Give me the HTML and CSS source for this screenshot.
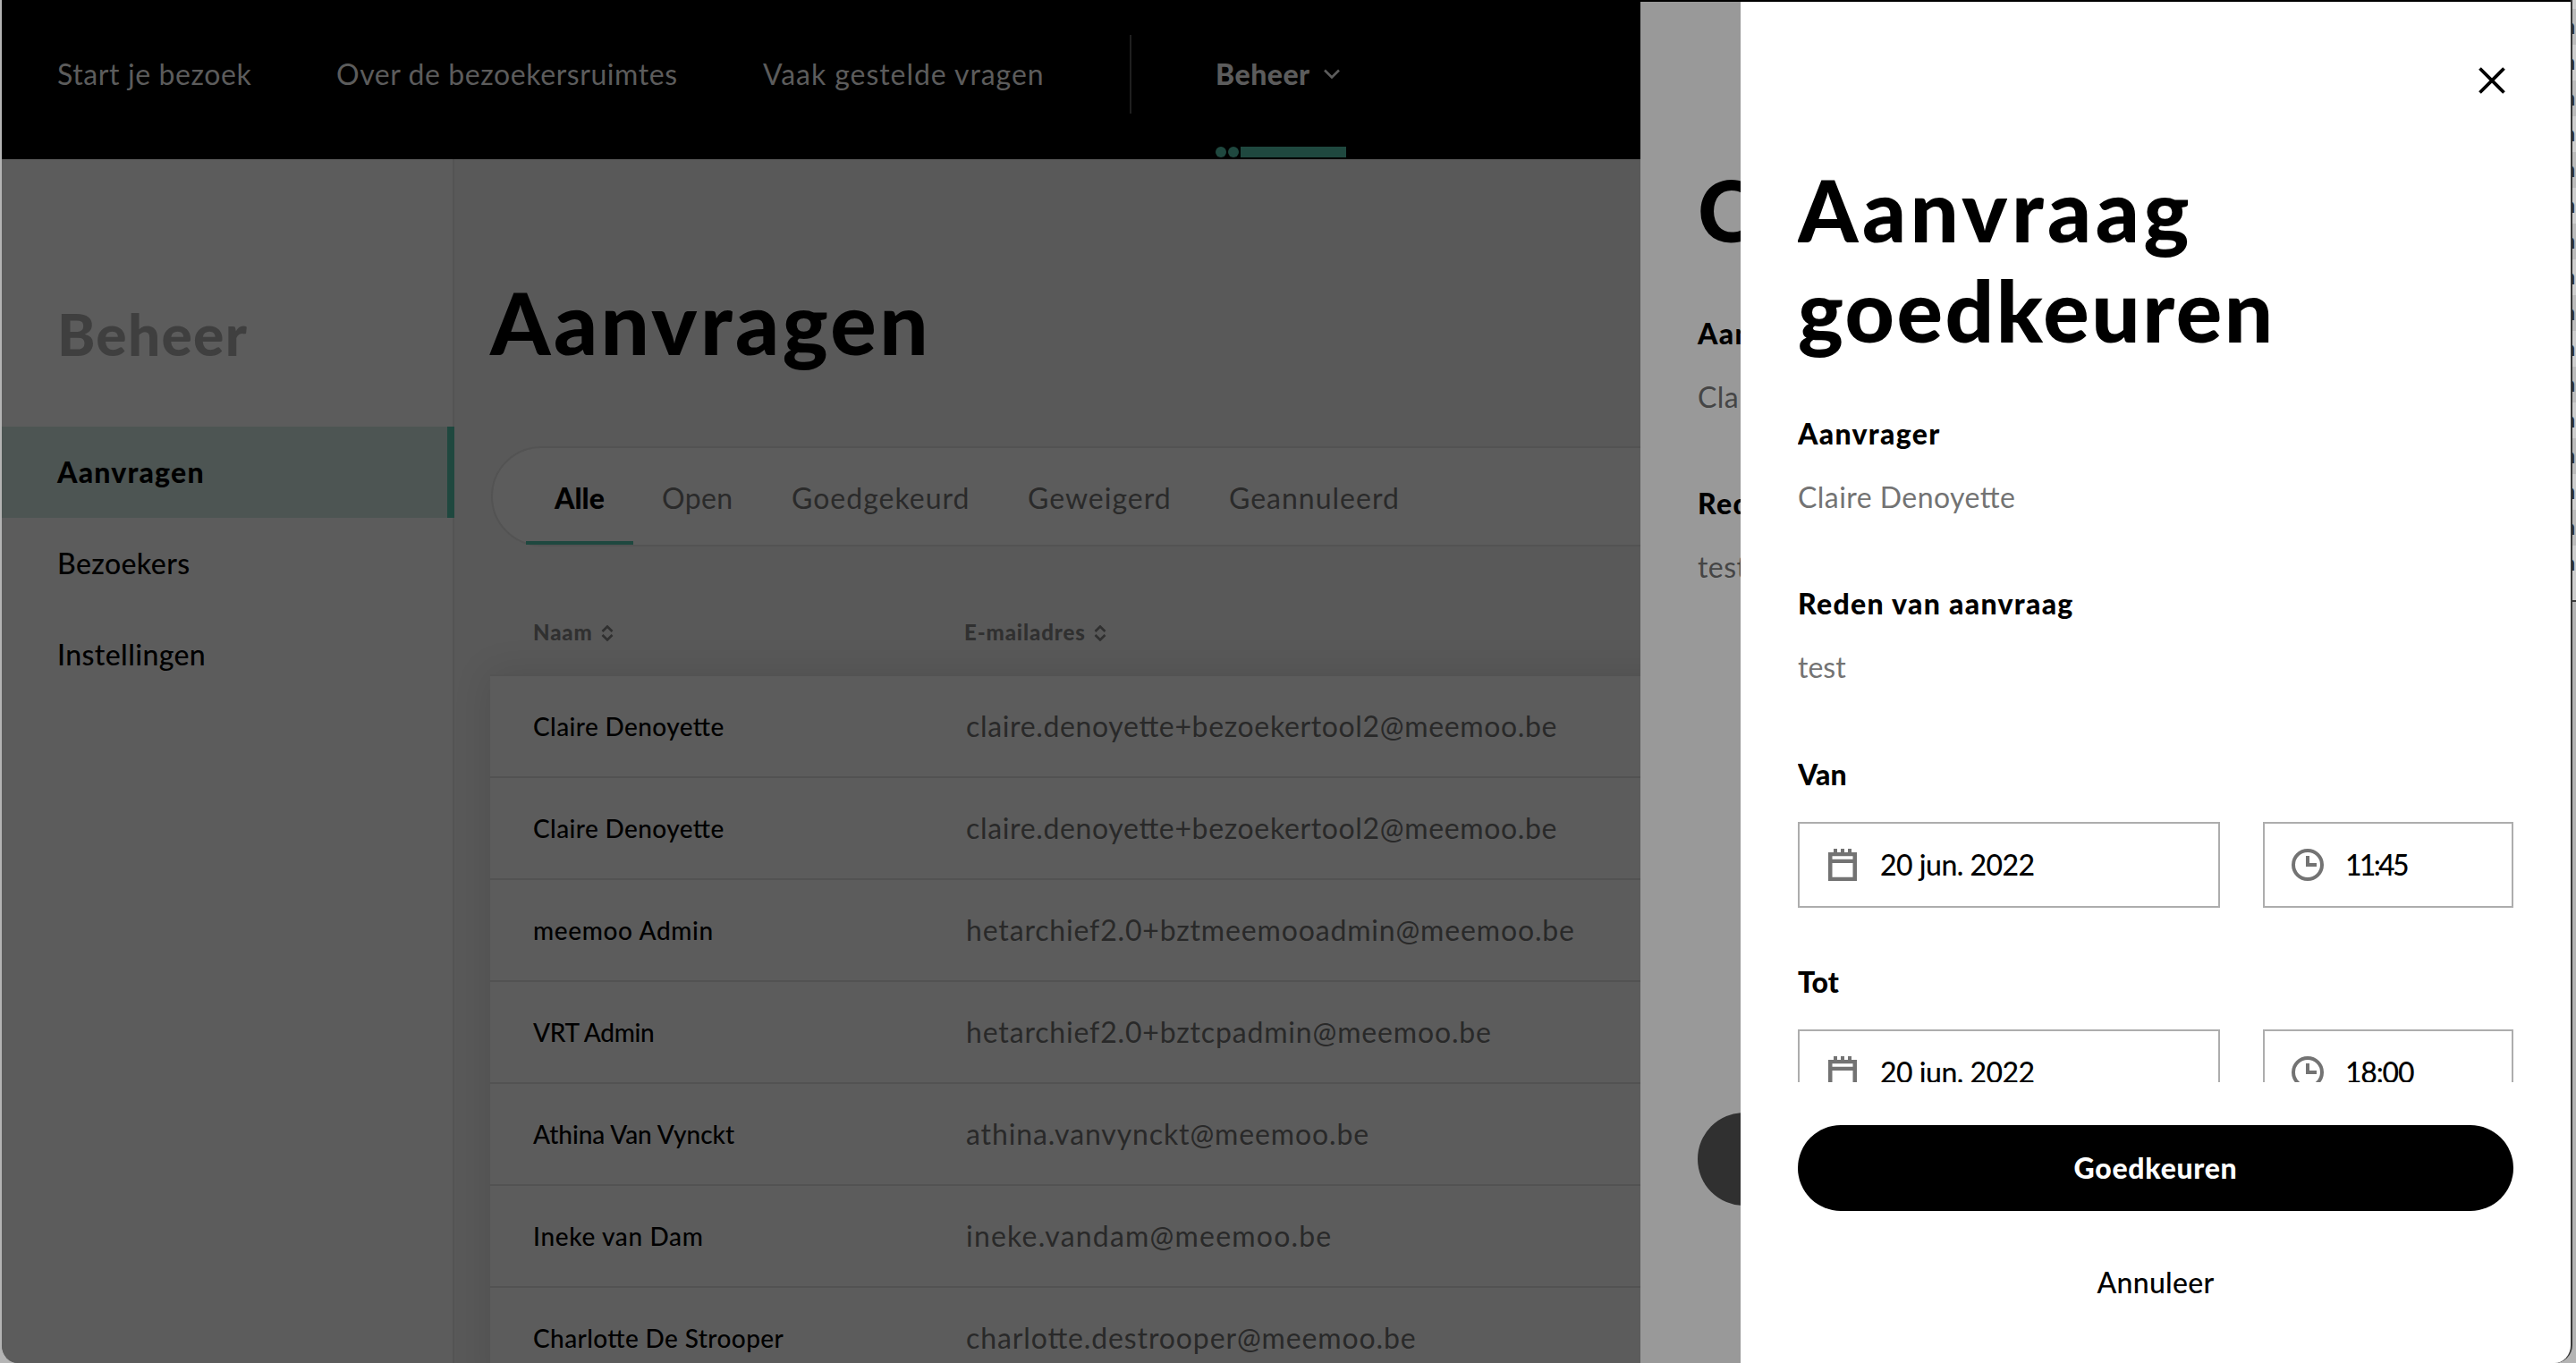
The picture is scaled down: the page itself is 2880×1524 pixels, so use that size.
FILE: index.html
```html
<!DOCTYPE html>
<html lang="nl">
<head>
    <meta charset="UTF-8">
    <meta name="viewport" content="width=device-width, initial-scale=1.0">
    <title>Aanvragen</title>
    <link rel="stylesheet" href="styles.css">
</head>
<body>
    <!-- other window behind the browser -->
    <div class="behind">
        <div>a</div><div>a</div><div>a</div><div>a</div><div>a</div><div>a</div><div>a</div><div>a</div>
        <div>a</div><div>a</div><div>a</div><div>a</div><div>a</div><div>a</div><div>a</div><div>a</div>
    </div>

    <div class="window">
        <header class="header">
            <nav class="nav">
                <a class="nav-link nav-start">Start je bezoek</a>
                <a class="nav-link nav-rooms">Over de bezoekersruimtes</a>
                <a class="nav-link nav-faq">Vaak gestelde vragen</a>
                <span class="nav-divider"></span>
                <a class="nav-link nav-admin">
                    <span class="nav-admin-text">Beheer</span>
                    <svg class="chevron" viewBox="0 0 18 11"><path d="M1 1.5l8 8 8-8" /></svg>
                    <span class="nav-active"><i class="dot"></i><i class="dot"></i><i class="line"></i></span>
                </a>
            </nav>
        </header>

        <div class="layout">
            <aside class="sidebar">
                <h2 class="sidebar-title">Beheer</h2>
                <ul class="menu">
                    <li class="menu-item active">Aanvragen</li>
                    <li class="menu-item">Bezoekers</li>
                    <li class="menu-item">Instellingen</li>
                </ul>
            </aside>

            <main class="main">
                <h1 class="title">Aanvragen</h1>
                <div class="tabs">
                    <span class="tab active">Alle</span>
                    <span class="tab tab-open">Open</span>
                    <span class="tab tab-approved">Goedgekeurd</span>
                    <span class="tab tab-denied">Geweigerd</span>
                    <span class="tab tab-cancelled">Geannuleerd</span>
                </div>

                <div class="table-head">
                    <span class="col-name"><span class="head-text">Naam</span><svg class="sort" viewBox="0 0 14 18"><path d="M1.5 7L7 1.5 12.5 7M1.5 11L7 16.5 12.5 11" /></svg></span>
                    <span class="col-mail"><span class="head-text">E-mailadres</span><svg class="sort" viewBox="0 0 14 18"><path d="M1.5 7L7 1.5 12.5 7M1.5 11L7 16.5 12.5 11" /></svg></span>
                </div>
                <div class="table">
                    <div class="row row-claire"><span class="col-name">Claire Denoyette</span><span class="col-mail">claire.denoyette+bezoekertool2@meemoo.be</span></div>
                    <div class="row row-claire"><span class="col-name">Claire Denoyette</span><span class="col-mail">claire.denoyette+bezoekertool2@meemoo.be</span></div>
                    <div class="row row-meemoo"><span class="col-name">meemoo Admin</span><span class="col-mail">hetarchief2.0+bztmeemooadmin@meemoo.be</span></div>
                    <div class="row row-vrt"><span class="col-name">VRT Admin</span><span class="col-mail">hetarchief2.0+bztcpadmin@meemoo.be</span></div>
                    <div class="row row-athina"><span class="col-name">Athina Van Vynckt</span><span class="col-mail">athina.vanvynckt@meemoo.be</span></div>
                    <div class="row row-ineke"><span class="col-name">Ineke van Dam</span><span class="col-mail">ineke.vandam@meemoo.be</span></div>
                    <div class="row row-charlotte"><span class="col-name">Charlotte De Strooper</span><span class="col-mail">charlotte.destrooper@meemoo.be</span></div>
                </div>
            </main>
        </div>

        <section class="blade blade-back">
            <h2 class="blade-title">C</h2>
            <p class="label">Aan</p>
            <p class="value">Cla</p>
            <p class="label">Red</p>
            <p class="value">test</p>
            <span class="back-button"></span>
        </section>

        <section class="blade blade-front">
            <svg class="close" viewBox="0 0 30 30"><path d="M1.5 1.5l27 27M28.5 1.5l-27 27" /></svg>
            <div class="blade-body">
                <h2 class="blade-title"><span class="title-one">Aanvraag</span><br><span class="title-two">goedkeuren</span></h2>
                <p class="label">Aanvrager</p>
                <p class="value">Claire Denoyette</p>
                <p class="label">Reden van aanvraag</p>
                <p class="value value-reason">test</p>
                <p class="label label-short">Van</p>
                <div class="fields">
                    <div class="field date">
                        <svg class="icon" viewBox="0 0 36 36"><path d="M2 4h32v32H2zM6.5 8.300v3.400h23V8.300zM6.5 16v15.700h23V16zM8 0h4v4H8zM16 0h4v4h-4zM24 0h4v4h-4z" fill-rule="evenodd" /></svg>
                        <span>20 jun. 2022</span>
                    </div>
                    <div class="field time time-from">
                        <svg class="icon" viewBox="0 0 36 36"><path d="M18 0a18 18 0 1 0 0 36a18 18 0 1 0 0-36zM18 4a14 14 0 1 1 0 28a14 14 0 1 1 0-28zM16 8h4v8h8v4H16z" fill-rule="evenodd" /></svg>
                        <span>11:45</span>
                    </div>
                </div>
                <p class="label label-short">Tot</p>
                <div class="fields">
                    <div class="field date">
                        <svg class="icon" viewBox="0 0 36 36"><path d="M2 4h32v32H2zM6.5 8.300v3.400h23V8.300zM6.5 16v15.700h23V16zM8 0h4v4H8zM16 0h4v4h-4zM24 0h4v4h-4z" fill-rule="evenodd" /></svg>
                        <span>20 jun. 2022</span>
                    </div>
                    <div class="field time time-to">
                        <svg class="icon" viewBox="0 0 36 36"><path d="M18 0a18 18 0 1 0 0 36a18 18 0 1 0 0-36zM18 4a14 14 0 1 1 0 28a14 14 0 1 1 0-28zM16 8h4v8h8v4H16z" fill-rule="evenodd" /></svg>
                        <span>18:00</span>
                    </div>
                </div>
            </div>
            <div class="blade-footer">
                <button class="button primary">Goedkeuren</button>
                <button class="button text">Annuleer</button>
            </div>
        </section>
    </div>
</body>
</html>
```
FILE: styles.css
```css
* {
    box-sizing: border-box;
}

body {
    margin: 0;
    background: #b4b4b4;
    font-family: Lato, "Open Sans", sans-serif;
    font-size: 32px;
    line-height: 52px;
    color: #000;
    white-space: nowrap;
    font-feature-settings: "liga" 1;
}

h1, h2, p, ul {
    margin: 0;
    padding: 0;
}

.behind {
    position: absolute;
    top: 0;
    right: 0;
    width: 6px;
    height: 673px;
    padding-top: 10px;
    overflow: hidden;
    background: #cfcfcf;
    border-bottom: 2px solid #3a3a3a;
    opacity: 0.99;
}

.behind div {
    display: flex;
    justify-content: flex-end;
    height: 40px;
    padding-right: 1px;
    font-size: 24px;
    line-height: 38px;
    font-weight: 900;
    color: #2a2a2a;
}

.behind div:nth-child(odd) {
    background: #bdbdbd;
}

.window {
    position: relative;
    width: 2876px;
    height: 1524px;
    overflow: hidden;
    background: #595959;
    border-left: 2px solid #b4b4b4;
    border-right: 2px solid #3a3a3a;
    border-radius: 0 0 20px 20px;
}

.header {
    height: 178px;
    background: #000;
    color: #5c5c5c;
}

.nav {
    display: flex;
    align-items: center;
    height: 165px;
    padding-left: 62px;
}

.nav-start {
    width: 312px;
    letter-spacing: 0.6px;
}

.nav-rooms {
    width: 477px;
    letter-spacing: 0.58px;
}

.nav-faq {
    width: 410px;
    letter-spacing: 0.94px;
}

.nav-divider {
    width: 2px;
    height: 88px;
    margin-right: 94px;
    background: #1f1f1f;
}

.nav-admin {
    position: relative;
    display: flex;
    align-items: center;
    width: 146px;
    font-weight: 900;
    letter-spacing: 0.5px;
}

.nav-admin-text {
    width: 121px;
}

.chevron {
    width: 18px;
    height: 11px;
    fill: none;
    stroke: #5c5c5c;
    stroke-width: 2.6;
}

.nav-active {
    position: absolute;
    left: 0;
    top: 107px;
    display: flex;
    gap: 2px;
    width: 146px;
}

.dot {
    width: 12px;
    height: 12px;
    border-radius: 50%;
    background: #1f483f;
}

.line {
    flex: 1;
    height: 12px;
    background: #1f483f;
}

.layout {
    display: flex;
    height: 1346px;
}

.sidebar {
    width: 506px;
    padding-top: 156px;
    background: #5c5c5c;
    border-right: 2px solid #545454;
}

.sidebar-title {
    padding: 0 0 63px 62px;
    font-size: 64px;
    line-height: 80px;
    font-weight: 900;
    letter-spacing: 1.3px;
    color: #3f3f3f;
}

.menu {
    list-style: none;
}

.menu-item {
    height: 102px;
    margin-bottom: 0.5px;
    padding-left: 62px;
    line-height: 100px;
    font-weight: 500;
    letter-spacing: 0.4px;
}

.menu-item.active {
    margin-right: -2px;
    background: #4d5553;
    border-right: 8px solid #1f483f;
    line-height: 101px;
    font-weight: 900;
    letter-spacing: 1.2px;
}

.main {
    flex: 1;
    padding: 122px 0 0 40px;
}

.title {
    font-size: 96px;
    line-height: 120px;
    font-weight: 900;
    letter-spacing: 3.5px;
}

.tabs {
    display: flex;
    height: 112px;
    margin: 79px 0 0 1px;
    padding-left: 37px;
    background: #5c5c5c;
    border: 2px solid #535353;
    border-radius: 56px 0 0 56px;
    line-height: 111px;
    letter-spacing: 1px;
    color: #2a2a2a;
}

.tab.active {
    width: 120px;
    margin-right: 32px;
    padding-left: 32px;
    border-bottom: 4px solid #1f483f;
    font-weight: 900;
    letter-spacing: 0;
    color: #000;
}

.tab-open {
    width: 145px;
    letter-spacing: 0.4px;
}

.tab-approved {
    width: 264px;
}

.tab-denied {
    width: 225px;
}

.table-head {
    display: flex;
    align-items: center;
    height: 143px;
    padding: 48px 0 0 48px;
    font-size: 24px;
    line-height: 36px;
    font-weight: 900;
    letter-spacing: 0.9px;
    color: #303030;
}

.col-name {
    width: 484px;
}

.table-head .col-name {
    width: 482px;
}

.head-text {
    margin-right: 9px;
}

.sort {
    width: 14px;
    height: 18px;
    vertical-align: -1px;
    fill: none;
    stroke: #303030;
    stroke-width: 2.6;
}

.table {
    border-top: 2px solid #535353;
    background: #5c5c5c;
    box-shadow: 0 0 40px rgba(0, 0, 0, 0.12);
}

.row {
    display: flex;
    height: 114px;
    padding-left: 48px;
    border-bottom: 2px solid #525252;
    line-height: 112px;
}

.row .col-name {
    font-size: 28px;
    font-weight: 500;
    letter-spacing: 0.4px;
}

.row .col-mail {
    letter-spacing: 0.88px;
    color: #292929;
}

.row-claire .col-mail {
    letter-spacing: 0.65px;
}

.row-meemoo .col-mail,
.row-vrt .col-mail {
    letter-spacing: 0.84px;
}

.row-meemoo .col-name,
.row-ineke .col-name {
    letter-spacing: 0.65px;
}

.row-vrt .col-name {
    letter-spacing: -0.3px;
}

.row-athina .col-name {
    letter-spacing: -0.05px;
}

.row-ineke .col-mail {
    letter-spacing: 1.2px;
}

.blade {
    position: absolute;
    top: 2px;
    bottom: 0;
}

.blade-back {
    left: 1832px;
    width: 112px;
    padding: 176px 0 0 64px;
    background: #999;
    overflow: hidden;
}

.blade-title {
    font-size: 96px;
    line-height: 112px;
    font-weight: 900;
}

.title-one {
    letter-spacing: 4.5px;
}

.title-two {
    letter-spacing: 2.5px;
}

.label {
    margin-top: 57px;
    line-height: 52px;
    font-weight: 900;
    letter-spacing: 1.3px;
}

.value {
    margin-top: 19px;
    line-height: 52px;
    letter-spacing: 0.45px;
    color: #737373;
}

.value + .label {
    margin-top: 67px;
}

.value-reason,
.label-short {
    letter-spacing: 0;
}

.value-reason + .label {
    margin-top: 68px;
}

.blade-back .value {
    color: #454545;
}

.back-button {
    display: block;
    width: 400px;
    height: 104px;
    margin-top: 584px;
    border-radius: 52px;
    background: #303030;
}

.blade-front {
    left: 1944px;
    right: 0;
    padding: 73px 62px 0 64px;
    background: #fff;
}

.close {
    display: block;
    width: 30px;
    height: 30px;
    margin: 0 11px 0 auto;
    fill: none;
    stroke: #000;
    stroke-width: 3.8;
}

.blade-body {
    height: 1105px;
    padding-top: 73px;
    overflow: hidden;
}

.fields {
    display: flex;
    gap: 48px;
    width: 800px;
    margin-top: 27px;
}

.field {
    display: flex;
    align-items: center;
    height: 96px;
    padding-left: 30px;
    border: 2px solid #adadad;
    font-weight: 500;
}

.date {
    width: 472px;
    letter-spacing: -0.5px;
}

.time {
    width: 280px;
}

.time-from {
    letter-spacing: -2.7px;
}

.time-to {
    letter-spacing: -1.2px;
}

.icon {
    width: 36px;
    height: 36px;
    margin-right: 24px;
    fill: #737373;
}

.fields + .label {
    margin-top: 57px;
}

.blade-footer {
    width: 800px;
    padding-top: 48px;
}

.button {
    display: block;
    width: 100%;
    height: 96px;
    padding: 0;
    border: none;
    font: inherit;
}

.primary {
    border-radius: 48px;
    background: #000;
    font-weight: 900;
    letter-spacing: 0.7px;
    color: #fff;
}

.text {
    margin-top: 32px;
    background: none;
    font-weight: 500;
    letter-spacing: 0.3px;
}
```
